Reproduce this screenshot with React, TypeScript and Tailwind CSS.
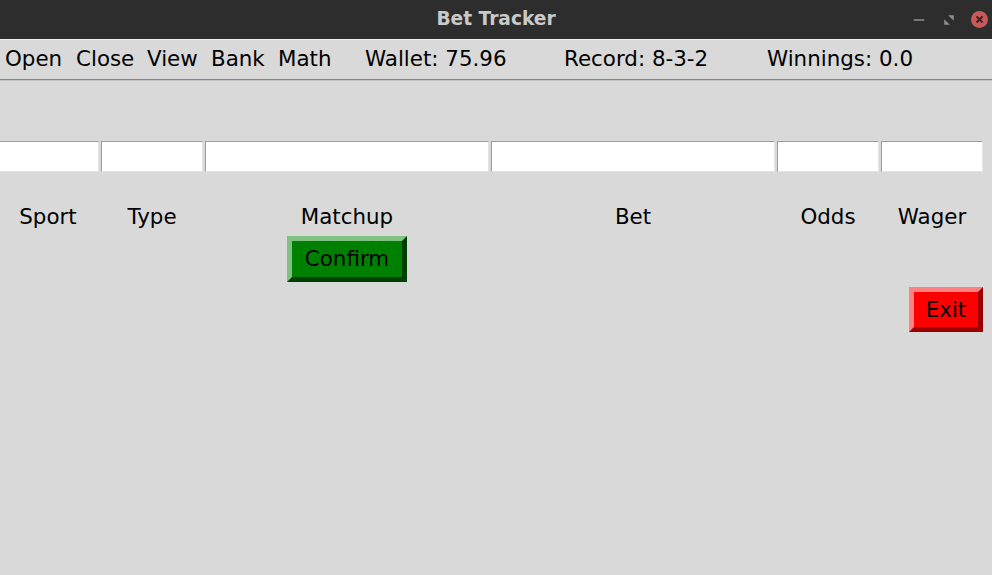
import { Minus } from "lucide-react";

const menu = [
  { label: "Open", w: "w-[71px]" },
  { label: "Close", w: "w-[71px]" },
  { label: "View", w: "w-[64px]" },
  { label: "Bank", w: "w-[67px]" },
  { label: "Math", w: "w-[87px]" },
  { label: "Wallet: 75.96", w: "w-[199px]" },
  { label: "Record: 8-3-2", w: "w-[203px]" },
  { label: "Winnings: 0.0", w: "w-[200px]" },
];

const columns = ["Sport", "Type", "Matchup", "Bet", "Odds", "Wager"];

function Entry() {
  return (
    <div className="h-[31px] mr-[2px] bg-white border-t border-l border-[#9d9d9d] border-r-[#e4e4e4] border-b-[#e4e4e4] border-r border-b" />
  );
}

export default function App() {
  return (
    <div
      className="w-[992px] h-[575px] overflow-hidden bg-[#d9d9d9] text-black flex flex-col"
      style={{ fontFamily: '"DejaVu Sans", sans-serif' }}
    >
      {/* title bar */}
      <div className="h-[39px] bg-[#2d2d2d] relative flex items-center justify-center shrink-0">
        <span className="text-[18.6px] font-bold text-[#c9c9c9] leading-none">
          Bet Tracker
        </span>
        <div className="absolute right-[4px] top-0 h-[39px] flex items-center gap-[14px]">
          <Minus className="w-[16px] h-[16px] text-[#8e8e8e]" strokeWidth={2.5} />
          <svg width="16" height="16" viewBox="0 0 16 16" className="text-[#8e8e8e]">
            <path d="M9 4h3v3z M7 12H4V9z" fill="currentColor" stroke="currentColor" strokeWidth="1.5" />
          </svg>
          <div className="w-[17px] h-[17px] rounded-full bg-[#c65a5a] flex items-center justify-center">
            <svg width="9" height="9" viewBox="0 0 9 9">
              <path d="M1.5 1.5l6 6M7.5 1.5l-6 6" stroke="#3a2020" strokeWidth="1.8" />
            </svg>
          </div>
        </div>
      </div>
      <div className="h-px bg-[#f2f2f2] shrink-0" />

      {/* menu bar */}
      <div className="h-[39px] flex items-center pl-[5px] pb-[1px] text-[21.4px] leading-none shrink-0">
        {menu.map((m) => (
          <span key={m.label} className={`${m.w} shrink-0 whitespace-nowrap`}>
            {m.label}
          </span>
        ))}
      </div>
      <div className="h-px bg-[#868686] shrink-0" />
      <div className="h-px bg-[#c4c4c4] shrink-0" />

      {/* form */}
      <div className="mt-[60px] ml-[-3px] grid grid-cols-[104px_104px_286px_286px_104px_104px] text-[21.4px]">
        {columns.map((c) => (
          <Entry key={c} />
        ))}
        {columns.map((c) => (
          <div key={c} className="h-[64px] pt-[33px] pr-[2px] leading-[24px] text-center">
            {c}
          </div>
        ))}
        <div />
        <div />
        <div className="flex justify-center pr-[2px]">
          <button className="w-[120px] h-[46px] bg-[#008000] border-[5px] border-t-[#80c080] border-l-[#80c080] border-r-[#004000] border-b-[#004000] leading-none text-black">
            Confirm
          </button>
        </div>
        <div />
        <div />
        <div />
        <div className="col-span-6 flex justify-end pr-[2px] mt-[5px]">
          <button className="w-[74px] h-[45px] bg-[#ff0000] border-[5px] border-t-[#ff8080] border-l-[#ff8080] border-r-[#990000] border-b-[#990000] leading-none text-black">
            Exit
          </button>
        </div>
      </div>
    </div>
  );
}
